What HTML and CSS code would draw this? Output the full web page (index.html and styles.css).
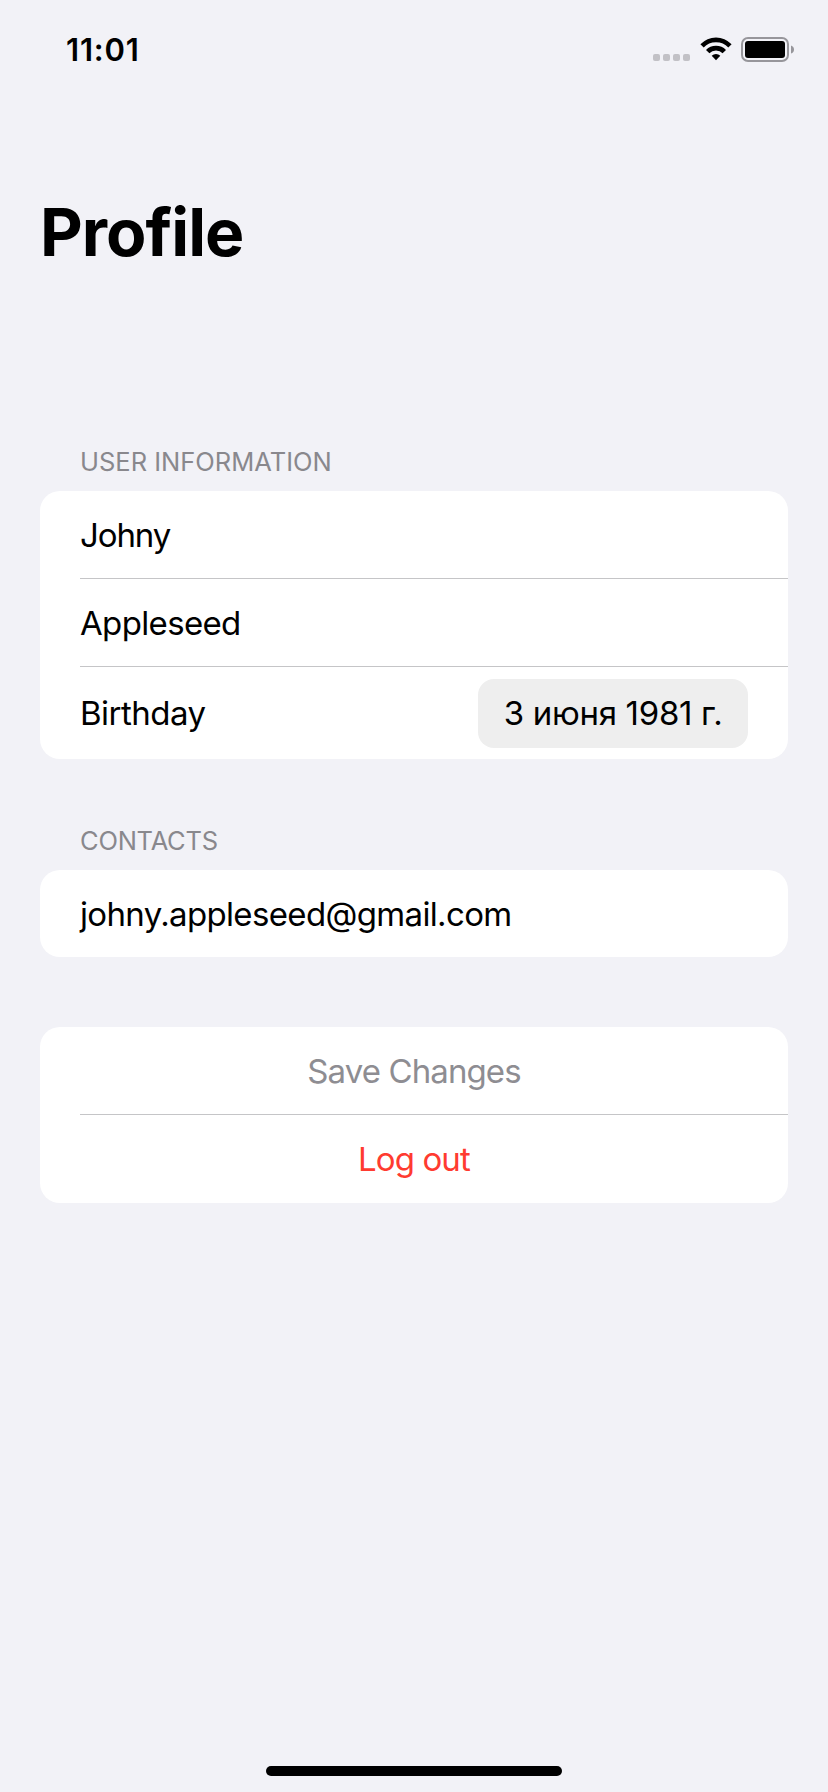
FILE: index.html
```html
<!DOCTYPE html>
<html lang="en">
<head>
<meta charset="utf-8">
<title>Profile</title>
<link rel="stylesheet" href="styles.css">
</head>
<body>
<div class="screen">
  <header class="status-bar">
    <span class="time">11:01</span>
    <div class="indicators">
      <svg class="signal" width="37" height="7" viewBox="0 0 37 7"><g fill="#c2c1c6"><rect width="7" height="7" rx="2"/><rect x="10" width="7" height="7" rx="2"/><rect x="20" width="7" height="7" rx="2"/><rect x="30" width="7" height="7" rx="2"/></g></svg>
      <svg class="wifi" width="32" height="24" viewBox="0 0 32 24"><path d="M.4 7.300Q7 .4 16 .4T31.600 7.300L28.300 10.600Q23.500 5.200 16 5.200T3.700 10.600Z"/><path d="M6 13Q10 8.800 16 8.800T26 13L22.600 16.300Q20 13.500 16 13.500T9.400 16.300Z"/><path d="M11.700 18.700Q13.500 17.100 16 17.100T20.300 18.700L16 23.300Z"/></svg>
      <svg class="battery" width="53" height="25" viewBox="0 0 53 25"><rect x="1" y="1" width="46" height="23" rx="6" fill="none" stroke="#97969b" stroke-width="2"/><rect x="4" y="4" width="40" height="17" rx="3"/><path d="M50 8.500Q53 9.500 53 12.500T50 16.500Z" fill="#97969b"/></svg>
    </div>
  </header>
  <h1 class="title">Profile</h1>
  <main class="form">
    <section>
      <h2 class="section-title user-title">USER INFORMATION</h2>
      <div class="card">
        <div class="row"><span class="first-name">Johny</span></div>
        <div class="row"><span class="last-name">Appleseed</span></div>
        <div class="row birthday-row"><span class="birthday">Birthday</span><span class="date"><span class="date-text">3 июня 1981 г.</span></span></div>
      </div>
    </section>
    <section class="contacts">
      <h2 class="section-title contacts-title">CONTACTS</h2>
      <div class="card"><div class="row"><span class="email">johny.appleseed@gmail.com</span></div></div>
    </section>
    <section class="card actions">
      <div class="row action save"><span>Save Changes</span></div>
      <div class="row action logout"><span>Log out</span></div>
    </section>
  </main>
  <div class="home-indicator"></div>
</div>
</body>
</html>
```
FILE: styles.css
```css
* { box-sizing: border-box; }
body { margin: 0; background: #f2f2f7; color: #000; font-family: Inter, "Liberation Sans", sans-serif; }
.screen { width: 828px; height: 1792px; display: flex; flex-direction: column; overflow: hidden; }
.status-bar { height: 99px; padding: 0 34px 0 66px; display: flex; align-items: center; justify-content: space-between; }
.time { font-size: 31px; font-weight: 600; letter-spacing: 0.8px; }
.indicators { height: 25px; display: flex; align-items: flex-start; }
.signal { margin-top: 17px; margin-right: 10px; }
.wifi { margin-right: 9px; }
.title { margin: 92px 40px 0; height: 82px; font-size: 66px; line-height: 82px; font-weight: 700; letter-spacing: -1px; }
.form { margin: 159px 40px 0; }
.section-title { margin: 0; padding-left: 40px; height: 59px; line-height: 59px; color: #89888d; font-size: 25.5px; font-weight: 400; }
.contacts-title { letter-spacing: -0.25px; }
.card { background: #fff; border-radius: 20px; padding-left: 40px; }
.row { height: 87px; display: flex; align-items: center; font-size: 33px; letter-spacing: -0.65px; }
.first-name { letter-spacing: -1.1px; }
.birthday { letter-spacing: -0.5px; }
.row + .row { height: 88px; border-top: 1px solid #c5c5c7; }
.row + .birthday-row { height: 93px; padding-right: 40px; justify-content: space-between; }
.date { width: 270px; height: 69px; border-radius: 16px; background: #eee; display: flex; align-items: center; justify-content: center; letter-spacing: -0.3px; }
.contacts { margin-top: 52px; }
.actions { margin-top: 70px; }
.action { justify-content: center; padding-right: 40px; letter-spacing: -0.9px; }
.row + .logout { height: 89px; color: #ff3b30; }
.save { color: #8e8d92; }
.home-indicator { width: 296px; height: 10px; border-radius: 5px; background: #000; margin: auto auto 16px; }
```
